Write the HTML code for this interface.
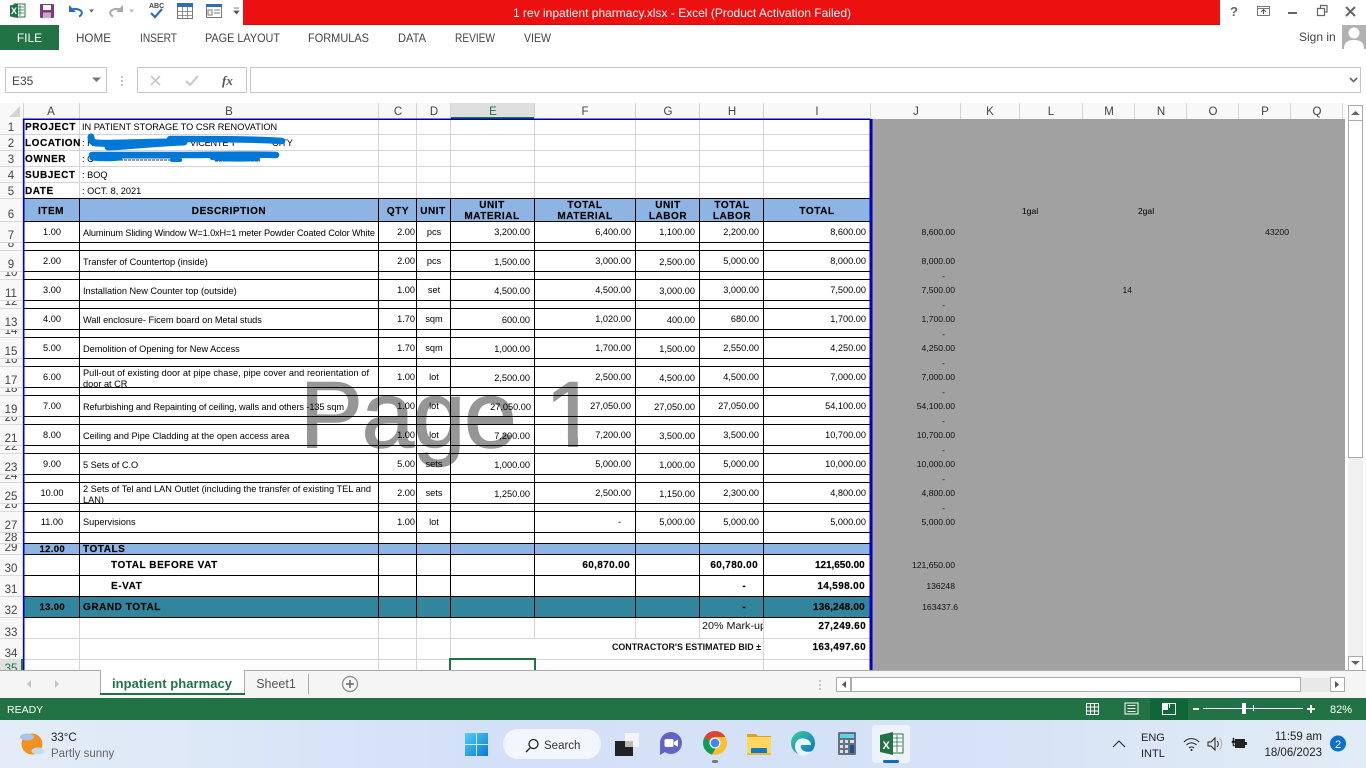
<!DOCTYPE html>
<html><head><meta charset="utf-8"><title>1 rev inpatient pharmacy.xlsx - Excel</title>
<style>
html,body{margin:0;padding:0;background:#fff;width:1366px;height:768px;overflow:hidden}
svg{display:block;font-family:"Liberation Sans",sans-serif}
.rb{font-size:12px;fill:#444}
.hd{font-size:11.5px;fill:#444;text-anchor:middle}
.t{font-size:9.2px;fill:#000}
.c{font-size:9.2px;fill:#000;text-anchor:middle}
.r{font-size:9.2px;fill:#000;text-anchor:end}
.b{font-size:10px;font-weight:bold;fill:#000;letter-spacing:.55px;stroke:#000;stroke-width:.15}
.bc{font-size:10px;font-weight:bold;fill:#000;letter-spacing:.55px;text-anchor:middle;stroke:#000;stroke-width:.15}
.br{font-size:10px;font-weight:bold;fill:#000;letter-spacing:.35px;text-anchor:end;stroke:#000;stroke-width:.15}
.j{font-size:8.6px;fill:#111;text-anchor:end}
.tb{font-size:11.5px;fill:#222}
</style></head><body>
<svg width="1366" height="768" viewBox="0 0 1366 768" xmlns="http://www.w3.org/2000/svg">
<rect width="1366" height="768" fill="#fff"/>

<!-- title bar -->
<rect x="243" y="0" width="977" height="25" fill="#ec1010"/>
<rect x="243" y="24" width="977" height="1" fill="#c81010"/>
<text x="682" y="17" font-size="12" fill="#fff" text-anchor="middle" textLength="338">1 rev inpatient pharmacy.xlsx -  Excel (Product Activation Failed)</text>

<!-- QAT -->
<path d="M14 4h11v13H14z" fill="#fff" stroke="#217346"/><path d="M17 7h7M17 10h7M17 13h7M20 5v11" stroke="#217346" fill="none" stroke-width=".8"/>
<path d="M10 5.500l8-1.500v14l-8-1.500z" fill="#217346"/><text x="11" y="14" font-size="9" font-weight="bold" fill="#fff">X</text>
<rect x="40" y="4" width="14" height="14" rx="1" fill="#80397b"/><rect x="43" y="5" width="8" height="5" fill="#fff"/><rect x="43" y="12.500" width="8" height="5.500" fill="#c9a7c6"/>
<path d="M70 11a7 5.500 0 0 1 12 1.500a5 5 0 0 1-3 4" fill="none" stroke="#2a6ebb" stroke-width="2"/><path d="M69 5v7h7z" fill="#2a6ebb"/><path d="M89 9.500h5l-2.500 3z" fill="#666"/>
<path d="M122 11a7 5.500 0 0 0-12 1.500a5 5 0 0 0 3 4" fill="none" stroke="#a9a9a9" stroke-width="2"/><path d="M123 5v7h-7z" fill="#a9a9a9"/><path d="M129 9.500h5l-2.500 3z" fill="#b5b5b5"/>
<text x="149" y="8" font-size="7" font-weight="bold" fill="#444">ABC</text><path d="M151 13l4 4 7-8" fill="none" stroke="#2a6ebb" stroke-width="2.200"/>
<rect x="177.500" y="3.500" width="15" height="15" fill="#fff" stroke="#777"/><rect x="177" y="3" width="16" height="4" fill="#2a6ebb"/><path d="M177.500 11.500h15M177.500 15.500h15M182.500 7v11M187.500 7v11" stroke="#777" fill="none" stroke-width=".8"/>
<rect x="206.500" y="4.500" width="15" height="13" fill="#fff" stroke="#777"/><rect x="206" y="4" width="16" height="3" fill="#2a6ebb"/><path d="M208 10h4v5h-4zM214 10h6M214 13h6" fill="none" stroke="#777"/>
<path d="M234 8h5M234 11h5l-2.500 3z" fill="#555" stroke="#555" stroke-width=".7"/>

<!-- window controls -->
<text x="1234" y="16" font-size="13" font-weight="bold" fill="#666" text-anchor="middle">?</text>
<rect x="1257.500" y="6.500" width="12" height="9" fill="none" stroke="#777"/><path d="M1257 8.500h13" stroke="#777"/><path d="M1263.500 14v-4M1261 12l2.500-2.500 2.500 2.500" fill="none" stroke="#555"/>
<rect x="1288" y="12" width="9" height="2" fill="#666"/>
<path d="M1317.500 8.500h7v7h-7zM1320.500 8v-2.500h6.500v6.500h-2.500" fill="none" stroke="#666" stroke-width="1.200"/>
<path d="M1346 7l9 9M1355 7l-9 9" stroke="#666" stroke-width="2"/>

<!-- ribbon tabs -->
<rect x="0" y="25" width="59" height="25" fill="#217346"/>
<text x="29.500" y="42" font-size="12" fill="#fff" text-anchor="middle">FILE</text>
<text class="rb" x="76" y="42" textLength="35" lengthAdjust="spacingAndGlyphs">HOME</text><text class="rb" x="140" y="42" textLength="37" lengthAdjust="spacingAndGlyphs">INSERT</text><text class="rb" x="205" y="42" textLength="75" lengthAdjust="spacingAndGlyphs">PAGE LAYOUT</text><text class="rb" x="308" y="42" textLength="61" lengthAdjust="spacingAndGlyphs">FORMULAS</text><text class="rb" x="398" y="42" textLength="28" lengthAdjust="spacingAndGlyphs">DATA</text><text class="rb" x="455" y="42" textLength="40" lengthAdjust="spacingAndGlyphs">REVIEW</text><text class="rb" x="524" y="42" textLength="27" lengthAdjust="spacingAndGlyphs">VIEW</text>
<text x="1299" y="41" font-size="12" fill="#444">Sign in</text>
<rect x="1342" y="25" width="24" height="24" fill="#b1b1b1"/><circle cx="1354" cy="33" r="5.500" fill="#fff"/><path d="M1344 49c0-7 4-9 10-9s10 2 10 9z" fill="#fff"/>

<!-- formula bar -->
<rect x="5.500" y="67.500" width="101" height="25" fill="#fff" stroke="#c6c6c6"/>
<text x="12" y="85" font-size="12" fill="#444">E35</text><path d="M92 77.500h9l-4.500 4.500z" fill="#777"/>
<path d="M122 76v2M122 80v2M122 84v2" stroke="#999" stroke-width="1.200"/>
<rect x="137.500" y="67.500" width="109" height="25" fill="#fff" stroke="#c6c6c6"/>
<rect x="250.500" y="67.500" width="1110" height="25" fill="#fff" stroke="#c6c6c6"/>
<path d="M151 76l9 9M160 76l-9 9" stroke="#c8c8c8" stroke-width="1.800"/>
<path d="M186 81l4 4 8-9" fill="none" stroke="#c8c8c8" stroke-width="2"/>
<text x="222" y="85" font-size="13" font-style="italic" font-family="Liberation Serif" font-weight="bold" fill="#555">fx</text>
<path d="M1350 78l3.500 3.500 3.500-3.500" fill="none" stroke="#666" stroke-width="1.600"/>

<!-- headers background -->
<rect x="0" y="103" width="1345" height="16" fill="#f8f8f8"/>
<rect x="0" y="103" width="23" height="567" fill="#f8f8f8"/>
<path d="M20 106v11h-11z" fill="#d4d4d4"/>
<rect x="450.500" y="103" width="84" height="15" fill="#dfdfdf"/><rect x="450.500" y="117" width="84" height="2" fill="#217346"/>
<path d="M23.500 103v16M79.500 103v16M378.500 103v16M416.500 103v16M450.500 103v16M534.500 103v16M635.500 103v16M699.500 103v16M763.500 103v16M870.500 103v16M960.500 103v16M1019.500 103v16M1082.500 103v16M1134.500 103v16M1186.500 103v16M1238.500 103v16M1290.500 103v16M1342.500 103v16" stroke="#d4d4d4" fill="none"/>
<g>
<text class="hd" x="51" y="115">A</text><text class="hd" x="229" y="115">B</text><text class="hd" x="398" y="115">C</text><text class="hd" x="434" y="115">D</text><text class="hd" x="493" y="115" style="fill:#217346">E</text><text class="hd" x="585" y="115">F</text><text class="hd" x="668" y="115">G</text><text class="hd" x="732" y="115">H</text><text class="hd" x="817" y="115">I</text><text class="hd" x="916" y="115">J</text><text class="hd" x="990" y="115">K</text><text class="hd" x="1051" y="115">L</text><text class="hd" x="1109" y="115">M</text><text class="hd" x="1161" y="115">N</text><text class="hd" x="1213" y="115">O</text><text class="hd" x="1265" y="115">P</text><text class="hd" x="1317" y="115">Q</text>
</g>

<!-- gray out-of-print area -->
<rect x="872" y="119" width="473" height="551" fill="#a1a1a1"/>

<!-- light gridlines -->
<path d="M23 134.500h847M23 150.500h847M23 166.500h847M23 182.500h847M23 638.500h847M23 659.500h847M79.500 119v79M378.500 119v79M416.500 119v79M450.500 119v79M534.500 119v79M635.500 119v79M699.500 119v79M763.500 119v79M79.500 618v52M378.500 618v52M416.500 618v52M450.500 618v52M534.500 618v21M635.500 618v21M699.500 618v21M763.500 618v52" stroke="#d4d4d4" fill="none"/>

<!-- fills -->
<rect x="24" y="199" width="846" height="22" fill="#8eb4e3"/>
<rect x="24" y="543" width="846" height="11" fill="#8eb4e3"/>
<rect x="24" y="596" width="846" height="21" fill="#31859c"/>

<!-- watermark sits behind the cell text and borders -->
<defs><clipPath id="oneclip"><rect x="540" y="370" width="50" height="69"/></clipPath></defs>
<text x="300" y="447" font-size="94" letter-spacing="-1" fill="#969696" stroke="#969696" stroke-width="1.500">Page</text>
<text x="545" y="447" font-size="94" fill="#969696" stroke="#969696" stroke-width="1.500" clip-path="url(#oneclip)">1</text>
<rect x="568" y="438" width="10" height="9" fill="#969696"/>

<!-- top rows text -->
<text class="b" x="25" y="130">PROJECT</text><text class="t" x="82" y="130">IN PATIENT STORAGE TO CSR RENOVATION</text>
<text class="b" x="25" y="146">LOCATION</text><text class="t" x="82" y="146">: H</text><text class="t" x="190" y="146" textLength="46">VICENTE T</text><text class="t" x="272" y="146">CITY</text>
<text class="b" x="25" y="162">OWNER</text><text class="t" x="82" y="162">: C</text>
<text class="b" x="25" y="178">SUBJECT</text><text class="t" x="82" y="178">: BOQ</text>
<text class="b" x="25" y="194">DATE</text><text class="t" x="82" y="194">: OCT. 8, 2021</text>

<!-- table header -->
<text class="bc" x="51" y="214">ITEM</text><text class="bc" x="229" y="214">DESCRIPTION</text><text class="bc" x="398" y="214">QTY</text><text class="bc" x="433" y="214">UNIT</text>
<text class="bc" x="492" y="208">UNIT</text><text class="bc" x="492" y="219">MATERIAL</text>
<text class="bc" x="585" y="208">TOTAL</text><text class="bc" x="585" y="219">MATERIAL</text>
<text class="bc" x="668" y="208">UNIT</text><text class="bc" x="668" y="219">LABOR</text>
<text class="bc" x="732" y="208">TOTAL</text><text class="bc" x="732" y="219">LABOR</text>
<text class="bc" x="817" y="214">TOTAL</text>

<!-- data -->
<g>
<text class="c" x="52" y="235">1.00</text><text class="t" x="83" y="236" textLength="292">Aluminum Sliding Window W=1.0xH=1 meter Powder Coated Color White</text><text class="r" x="415" y="235">2.00</text><text class="c" x="434" y="235">pcs</text><text class="r" x="530" y="235">3,200.00</text><text class="r" x="631" y="235">6,400.00</text><text class="r" x="695" y="235">1,100.00</text><text class="r" x="759" y="235">2,200.00</text><text class="r" x="866" y="235">8,600.00</text>
<text class="c" x="52" y="264">2.00</text><text class="t" x="83" y="265">Transfer of Countertop (inside)</text><text class="r" x="415" y="264">2.00</text><text class="c" x="434" y="264">pcs</text><text class="r" x="530" y="265">1,500.00</text><text class="r" x="631" y="264">3,000.00</text><text class="r" x="695" y="265">2,500.00</text><text class="r" x="759" y="264">5,000.00</text><text class="r" x="866" y="264">8,000.00</text>
<text class="c" x="52" y="293">3.00</text><text class="t" x="83" y="294">Installation New Counter top (outside)</text><text class="r" x="415" y="293">1.00</text><text class="c" x="434" y="293">set</text><text class="r" x="530" y="294">4,500.00</text><text class="r" x="631" y="293">4,500.00</text><text class="r" x="695" y="294">3,000.00</text><text class="r" x="759" y="293">3,000.00</text><text class="r" x="866" y="293">7,500.00</text>
<text class="c" x="52" y="322">4.00</text><text class="t" x="83" y="323">Wall enclosure- Ficem board on Metal studs</text><text class="r" x="415" y="322">1.70</text><text class="c" x="434" y="322">sqm</text><text class="r" x="530" y="323">600.00</text><text class="r" x="631" y="322">1,020.00</text><text class="r" x="695" y="323">400.00</text><text class="r" x="759" y="322">680.00</text><text class="r" x="866" y="322">1,700.00</text>
<text class="c" x="52" y="351">5.00</text><text class="t" x="83" y="352">Demolition of Opening for New Access</text><text class="r" x="415" y="351">1.70</text><text class="c" x="434" y="351">sqm</text><text class="r" x="530" y="352">1,000.00</text><text class="r" x="631" y="351">1,700.00</text><text class="r" x="695" y="352">1,500.00</text><text class="r" x="759" y="351">2,550.00</text><text class="r" x="866" y="351">4,250.00</text>
<text class="c" x="52" y="380">6.00</text><text class="t" x="83" y="376" textLength="286">Pull-out of existing door at pipe chase, pipe cover and reorientation of</text><text class="t" x="83" y="387">door at CR</text><text class="r" x="415" y="380">1.00</text><text class="c" x="434" y="380">lot</text><text class="r" x="530" y="381">2,500.00</text><text class="r" x="631" y="380">2,500.00</text><text class="r" x="695" y="381">4,500.00</text><text class="r" x="759" y="380">4,500.00</text><text class="r" x="866" y="380">7,000.00</text>
<text class="c" x="52" y="409">7.00</text><text class="t" x="83" y="410" textLength="261">Refurbishing and Repainting of ceiling, walls and others -135 sqm</text><text class="r" x="415" y="409">1.00</text><text class="c" x="434" y="409">lot</text><text class="r" x="531" y="410">27,050.00</text><text class="r" x="631" y="409">27,050.00</text><text class="r" x="695" y="410">27,050.00</text><text class="r" x="759" y="409">27,050.00</text><text class="r" x="866" y="409">54,100.00</text>
<text class="c" x="52" y="438">8.00</text><text class="t" x="83" y="439">Ceiling and Pipe Cladding at the open access area</text><text class="r" x="415" y="438">1.00</text><text class="c" x="434" y="438">lot</text><text class="r" x="530" y="439">7,200.00</text><text class="r" x="631" y="438">7,200.00</text><text class="r" x="695" y="439">3,500.00</text><text class="r" x="759" y="438">3,500.00</text><text class="r" x="866" y="438">10,700.00</text>
<text class="c" x="52" y="467">9.00</text><text class="t" x="83" y="468">5 Sets of C.O</text><text class="r" x="415" y="467">5.00</text><text class="c" x="434" y="467">sets</text><text class="r" x="530" y="468">1,000.00</text><text class="r" x="631" y="467">5,000.00</text><text class="r" x="695" y="468">1,000.00</text><text class="r" x="759" y="467">5,000.00</text><text class="r" x="866" y="467">10,000.00</text>
<text class="c" x="52" y="496">10.00</text><text class="t" x="83" y="492" textLength="288">2 Sets of Tel and LAN Outlet (including the transfer of existing TEL and</text><text class="t" x="83" y="503">LAN)</text><text class="r" x="415" y="496">2.00</text><text class="c" x="434" y="496">sets</text><text class="r" x="530" y="497">1,250.00</text><text class="r" x="631" y="496">2,500.00</text><text class="r" x="695" y="497">1,150.00</text><text class="r" x="759" y="496">2,300.00</text><text class="r" x="866" y="496">4,800.00</text>
<text class="c" x="52" y="525">11.00</text><text class="t" x="83" y="525">Supervisions</text><text class="r" x="415" y="525">1.00</text><text class="c" x="434" y="525">lot</text><text class="r" x="621" y="525">-</text><text class="r" x="695" y="525">5,000.00</text><text class="r" x="759" y="525">5,000.00</text><text class="r" x="866" y="525">5,000.00</text>
</g>
<!-- clip overflow of 2-line rows -->
<rect x="80" y="388" width="60" height="7" fill="#fff"/><rect x="80" y="504" width="30" height="7" fill="#fff"/>

<!-- black grid -->
<path d="M24 198.500h846M24 221.500h846M24 242.500h846M24 250.500h846M24 271.500h846M24 279.500h846M24 300.500h846M24 308.500h846M24 329.500h846M24 337.500h846M24 358.500h846M24 366.500h846M24 387.500h846M24 395.500h846M24 416.500h846M24 424.500h846M24 445.500h846M24 453.500h846M24 474.500h846M24 482.500h846M24 503.500h846M24 511.500h846M24 532.500h846M24 543.500h846M24 554.500h846M24 575.500h846M24 596.500h846M24 617.500h846" stroke="#000" fill="none"/>
<path d="M79.500 198v420M378.500 198v420M416.500 198v420M450.500 198v420M534.500 198v420M635.500 198v420M699.500 198v420M763.500 198v420" stroke="#000" fill="none"/>

<!-- totals -->
<text class="br" x="65" y="552" style="font-size:9.500px">12.00</text><text class="b" x="83" y="552">TOTALS</text>
<text class="b" x="111" y="568">TOTAL BEFORE VAT</text><text class="br" x="630" y="568">60,870.00</text><text class="br" x="758" y="568">60,780.00</text><text class="br" x="865" y="568" textLength="50">121,650.00</text>
<text class="b" x="111" y="589">E-VAT</text><text class="br" x="746" y="589">-</text><text class="br" x="865" y="589">14,598.00</text>
<text class="br" x="65" y="610" style="font-size:9.500px">13.00</text><text class="b" x="83" y="610">GRAND TOTAL</text><text class="br" x="746" y="610">-</text><text class="br" x="865" y="610" textLength="52">136,248.00</text>
<svg x="700" y="618" width="63" height="20" viewBox="700 618 63 20"><text x="702" y="629" font-size="9.800" fill="#111" textLength="64" lengthAdjust="spacingAndGlyphs">20%  Mark-up</text></svg>
<text class="br" x="866" y="629">27,249.60</text>
<text x="612" y="650" font-size="9.500" font-weight="bold" fill="#111" textLength="149" lengthAdjust="spacingAndGlyphs">CONTRACTOR'S ESTIMATED BID ±</text>
<text class="br" x="866" y="650">163,497.60</text>

<!-- right columns in gray -->
<text class="c" x="1030" y="214" style="font-size:8.600px">1gal</text><text class="c" x="1146" y="214" style="font-size:8.600px">2gal</text>
<text class="j" x="1289" y="235">43200</text><text class="j" x="1132" y="293">14</text>
<text class="j" x="955" y="235">8,600.00</text><text class="j" x="955" y="264">8,000.00</text><text class="j" x="945" y="279">-</text><text class="j" x="955" y="293">7,500.00</text><text class="j" x="945" y="308">-</text><text class="j" x="955" y="322">1,700.00</text><text class="j" x="945" y="337">-</text><text class="j" x="955" y="351">4,250.00</text><text class="j" x="945" y="366">-</text><text class="j" x="955" y="380">7,000.00</text><text class="j" x="945" y="395">-</text><text class="j" x="955" y="409">54,100.00</text><text class="j" x="945" y="424">-</text><text class="j" x="955" y="438">10,700.00</text><text class="j" x="945" y="453">-</text><text class="j" x="955" y="467">10,000.00</text><text class="j" x="945" y="482">-</text><text class="j" x="955" y="496">4,800.00</text><text class="j" x="945" y="511">-</text><text class="j" x="955" y="525">5,000.00</text>
<text class="j" x="955" y="568">121,650.00</text><text class="j" x="955" y="589">136248</text><text class="j" x="958" y="610">163437.6</text>

<!-- redaction strokes -->
<path d="M120 160h50M215 161h45" fill="none" stroke="#333" stroke-width="1" stroke-dasharray="3 1"/>
<path d="M91 137c0 4 2 6 6 6 14 1 40-1 76-1" fill="none" stroke="#0078d7" stroke-width="7" stroke-linecap="round"/>
<path d="M108 147c20-1 50-4 76-5" fill="none" stroke="#0078d7" stroke-width="7" stroke-linecap="round"/>
<path d="M170 139c40 0 80 0 112 2" fill="none" stroke="#0078d7" stroke-width="6.500" stroke-linecap="round"/>
<path d="M92 155c30 0 70 0 90 0s70-1 94 0" fill="none" stroke="#0078d7" stroke-width="6.500" stroke-linecap="round"/>
<path d="M92 158c10 1 20 1 28 0" fill="none" stroke="#0078d7" stroke-width="5" stroke-linecap="round"/>
<path d="M120 157h50" fill="none" stroke="#0078d7" stroke-width="3" stroke-linecap="round"/>
<path d="M172 160h8" fill="none" stroke="#0078d7" stroke-width="4" stroke-linecap="round"/>
<path d="M212 158c15 2 30 2 46 1" fill="none" stroke="#0078d7" stroke-width="4" stroke-linecap="round"/>

<!-- blue print border -->
<rect x="23" y="119" width="1.500" height="551" fill="#0000c8"/>
<rect x="23" y="118.500" width="847" height="1.500" fill="#0000a8"/>
<rect x="869.500" y="119" width="3" height="551" fill="#0000c8"/>

<!-- selected cell -->
<rect x="450" y="659" width="85" height="14" fill="#fff" stroke="#217346" stroke-width="2"/>

<!-- row headers -->
<rect x="0" y="119" width="23" height="551" fill="#f8f8f8"/>
<path d="M0 134.500h23M0 150.500h23M0 166.500h23M0 182.500h23M0 198.500h23M0 221.500h23M0 242.500h23M0 250.500h23M0 271.500h23M0 279.500h23M0 300.500h23M0 308.500h23M0 329.500h23M0 337.500h23M0 358.500h23M0 366.500h23M0 387.500h23M0 395.500h23M0 416.500h23M0 424.500h23M0 445.500h23M0 453.500h23M0 474.500h23M0 482.500h23M0 503.500h23M0 511.500h23M0 532.500h23M0 543.500h23M0 554.500h23M0 575.500h23M0 596.500h23M0 617.500h23M0 638.500h23M0 659.500h23" stroke="#d9d9d9" fill="none"/>
<rect x="22" y="119" width="1" height="540" fill="#d4d4d4"/>
<rect x="0" y="660" width="21" height="10" fill="#dfdfdf"/><rect x="21" y="659" width="2" height="11" fill="#217346"/>
<text class="hd" x="11" y="131">1</text><text class="hd" x="11" y="147">2</text><text class="hd" x="11" y="163">3</text><text class="hd" x="11" y="179">4</text><text class="hd" x="11" y="195">5</text><text class="hd" x="11" y="218">6</text><text class="hd" x="11" y="239">7</text>
<svg x="0" y="243" width="23" height="7" viewBox="0 243 23 7"><text class="hd" x="11" y="247">8</text></svg>
<text class="hd" x="11" y="268">9</text>
<svg x="0" y="272" width="23" height="7" viewBox="0 272 23 7"><text class="hd" x="11" y="276">10</text></svg>
<text class="hd" x="11" y="297">11</text>
<svg x="0" y="301" width="23" height="7" viewBox="0 301 23 7"><text class="hd" x="11" y="305">12</text></svg>
<text class="hd" x="11" y="326">13</text>
<svg x="0" y="330" width="23" height="7" viewBox="0 330 23 7"><text class="hd" x="11" y="334">14</text></svg>
<text class="hd" x="11" y="355">15</text>
<svg x="0" y="359" width="23" height="7" viewBox="0 359 23 7"><text class="hd" x="11" y="363">16</text></svg>
<text class="hd" x="11" y="384">17</text>
<svg x="0" y="388" width="23" height="7" viewBox="0 388 23 7"><text class="hd" x="11" y="392">18</text></svg>
<text class="hd" x="11" y="413">19</text>
<svg x="0" y="417" width="23" height="7" viewBox="0 417 23 7"><text class="hd" x="11" y="421">20</text></svg>
<text class="hd" x="11" y="442">21</text>
<svg x="0" y="446" width="23" height="7" viewBox="0 446 23 7"><text class="hd" x="11" y="450">22</text></svg>
<text class="hd" x="11" y="471">23</text>
<svg x="0" y="475" width="23" height="7" viewBox="0 475 23 7"><text class="hd" x="11" y="479">24</text></svg>
<text class="hd" x="11" y="500">25</text>
<svg x="0" y="504" width="23" height="7" viewBox="0 504 23 7"><text class="hd" x="11" y="508">26</text></svg>
<text class="hd" x="11" y="529">27</text>
<svg x="0" y="533" width="23" height="10" viewBox="0 533 23 10"><text class="hd" x="11" y="541">28</text></svg>
<svg x="0" y="544" width="23" height="10" viewBox="0 544 23 10"><text class="hd" x="11" y="551">29</text></svg>
<text class="hd" x="11" y="572">30</text><text class="hd" x="11" y="593">31</text><text class="hd" x="11" y="614">32</text><text class="hd" x="11" y="636">33</text><text class="hd" x="11" y="657">34</text>
<svg x="0" y="660" width="21" height="10" viewBox="0 660 21 10"><text class="hd" x="11" y="672" style="fill:#217346">35</text></svg>

<!-- vertical scrollbar -->
<rect x="1345" y="103" width="21" height="567" fill="#fff"/>
<rect x="1348" y="105" width="15" height="565" fill="#f0f0f0"/>
<rect x="1348.500" y="105.500" width="14" height="15" fill="#fff" stroke="#ababab"/><path d="M1351 115l4.500-4 4.500 4z" fill="#666"/>
<rect x="1348.500" y="120.500" width="14" height="337" fill="#fff" stroke="#ababab"/>
<rect x="1348.500" y="656.500" width="14" height="14" fill="#fff" stroke="#ababab"/><path d="M1351 661l4.500 4 4.500-4z" fill="#666"/>

<!-- sheet tabs -->
<rect x="0" y="670" width="1366" height="28" fill="#f5f5f5"/>
<rect x="0" y="670" width="100" height="1" fill="#ababab"/><rect x="244" y="670" width="1122" height="1" fill="#ababab"/>
<path d="M31 680v8l-4-4zM55 680v8l4-4z" fill="#c4c4c4"/>
<path d="M100.500 670v25M244.500 670v25" stroke="#ababab" fill="none"/>
<rect x="101" y="670" width="143" height="23" fill="#fff"/><rect x="100" y="693" width="145" height="2" fill="#217346"/>
<text x="172" y="688" font-size="13" font-weight="bold" fill="#217346" text-anchor="middle" textLength="120">inpatient pharmacy</text>
<text x="276" y="688" font-size="12.500" fill="#555" text-anchor="middle">Sheet1</text>
<rect x="308" y="674" width="1" height="20" fill="#ababab"/>
<circle cx="350" cy="684" r="7.500" fill="none" stroke="#888" stroke-width="1.200"/><path d="M350 680v8M346 684h8" stroke="#666" stroke-width="1.500"/>
<path d="M820 680v2M820 684v2M820 688v2" stroke="#999"/>
<rect x="836.500" y="677.500" width="14" height="14" fill="#fff" stroke="#ababab"/><path d="M846 681v7l-4-3.500z" fill="#555"/>
<rect x="851.500" y="677.500" width="449" height="14" fill="#fff" stroke="#ababab"/>
<rect x="1301" y="678" width="29" height="14" fill="#e9e9e9"/>
<rect x="1330.500" y="677.500" width="14" height="14" fill="#fff" stroke="#ababab"/><path d="M1335 681v7l4-3.500z" fill="#555"/>

<!-- status bar -->
<rect x="0" y="698" width="1366" height="22" fill="#217346"/>
<text x="7" y="713" font-size="10.500" fill="#fff">READY</text>
<path d="M1086.500 703.500h12v11h-12zM1086.500 707h12M1086.500 711h12M1090.500 703.500v11M1094.500 703.500v11" stroke="#fff" fill="none"/>
<rect x="1125" y="703" width="13" height="11" fill="none" stroke="#fff"/><path d="M1127.500 705.500h8M1127.500 708.500h8M1127.500 711.500h8" stroke="#fff"/>
<rect x="1150" y="699" width="38" height="21" fill="#0f6638"/>
<path d="M1162.500 703.500h13v11h-13z" fill="none" stroke="#fff"/><path d="M1163 704h5v6h-5z" fill="#fff"/><path d="M1169 703v5h1v-5z" fill="#fff"/>
<rect x="1193" y="708" width="6" height="2" fill="#fff"/>
<rect x="1203" y="708" width="100" height="1" fill="#fff"/>
<rect x="1242" y="703" width="4" height="11" fill="#fff"/><rect x="1253" y="705" width="1" height="6" fill="#fff"/>
<path d="M1307 709h8M1311 705v8" stroke="#fff" stroke-width="2"/>
<text x="1330" y="713" font-size="11" fill="#fff">82%</text>

<!-- taskbar -->
<defs>
<linearGradient id="tb" x1="0" x2="1" y1="0" y2="0"><stop offset="0" stop-color="#e4edf7"/><stop offset=".35" stop-color="#d3e0f7"/><stop offset=".7" stop-color="#d6e2f6"/><stop offset="1" stop-color="#e1ecf6"/></linearGradient>
<linearGradient id="wn" x1="0" x2="1" y1="0" y2="1"><stop offset="0" stop-color="#4fd0f5"/><stop offset="1" stop-color="#0a78d8"/></linearGradient>
<linearGradient id="ed" x1="0" x2="1" y1="0" y2="1"><stop offset="0" stop-color="#3ccf9a"/><stop offset="1" stop-color="#0b6fc9"/></linearGradient>
</defs>
<rect x="0" y="720" width="1366" height="48" fill="url(#tb)"/>
<!-- weather -->
<circle cx="32" cy="744" r="10.500" fill="#f29020"/>
<ellipse cx="27" cy="737" rx="7" ry="3.500" fill="#a9c6e6"/><ellipse cx="38" cy="751" rx="6.500" ry="3.500" fill="#c7dbf0"/>
<text x="51" y="741" font-size="11.500" fill="#222">33°C</text><text x="51" y="757" font-size="11.500" fill="#666">Partly sunny</text>
<!-- win logo -->
<path d="M465 733h11v11h-11zM477 733h11v11h-11zM465 745h11v11h-11zM477 745h11v11h-11z" fill="url(#wn)"/>
<!-- search -->
<rect x="503" y="729" width="98" height="30" rx="15" fill="#f3f6fc"/>
<circle cx="533.500" cy="744" r="4.500" fill="none" stroke="#222" stroke-width="1.300"/><path d="M530 748l-4 4" stroke="#222" stroke-width="1.300"/>
<text x="544" y="749" font-size="11.500" fill="#333">Search</text>
<!-- task view -->
<rect x="625" y="733" width="14" height="14" fill="#f4f4f4"/><rect x="615" y="741" width="18" height="15" fill="#222"/><rect x="625" y="741" width="8" height="6" fill="#bbb"/>
<!-- meet -->
<circle cx="671" cy="743" r="11" fill="#6264c4"/><path d="M660 744v11l5-3z" fill="#6264c4"/><rect x="664.500" y="739" width="9" height="8" rx="1.500" fill="#fff"/><path d="M674 742l4-2.500v7.500l-4-2.500z" fill="#fff"/>
<!-- chrome -->
<circle cx="715" cy="743" r="12" fill="#fbc02d"/><path d="M715 731a12 12 0 0 1 10.400 6H715a6 6 0 0 0-5.600 3.800L704.600 737A12 12 0 0 1 715 731z" fill="#db4437"/><path d="M704.600 737a12 12 0 0 0 7.400 17.600l5-8.600a6 6 0 0 1-7.600-5.200z" fill="#0f9d58"/><circle cx="715" cy="743" r="5.500" fill="#fff"/><circle cx="715" cy="743" r="4.300" fill="#4285f4"/>
<rect x="712" y="760" width="6" height="3" rx="1.500" fill="#777"/>
<!-- folder -->
<path d="M747 734h9l2 2h13v19h-24z" fill="#d9a520"/><rect x="747" y="737" width="24" height="18" fill="#ffd75e"/><rect x="751" y="748" width="16" height="7" rx="1" fill="#0f7bc4"/><rect x="747" y="753" width="24" height="2" fill="#f0b73c"/>
<!-- edge -->
<circle cx="803" cy="743" r="12" fill="url(#ed)"/><path d="M795 746c0-6 6-9 11-7 3 1 5 3 5 6h-8c-2 0-3 1-2 3 1 3 6 5 11 3-3 4-8 5-12 4-3-1-5-5-5-9z" fill="#fff" opacity=".9"/>
<!-- calculator -->
<rect x="838" y="732" width="18" height="23" rx="1" fill="#64727f"/><rect x="840" y="734" width="14" height="4" fill="#5fd2ee"/>
<path d="M840 740h3v3h-3zM845 740h3v3h-3zM850 740h4v3h-4zM840 745h3v3h-3zM845 745h3v3h-3zM840 750h3v3h-3zM845 750h3v3h-3z" fill="#d8dfe6"/><rect x="850" y="745" width="4" height="8" fill="#1f4e8c"/>
<!-- excel active -->
<rect x="872" y="725" width="38" height="38" rx="3" fill="#eef3fb"/>
<rect x="889" y="734" width="14" height="19" fill="#fff" stroke="#217346"/><path d="M893 738h9M893 742h9M893 746h9M897 735v17" stroke="#217346" stroke-width=".8"/>
<path d="M880 735l13-3v23l-13-3z" fill="#217346"/><text x="882.500" y="749" font-size="11" font-weight="bold" fill="#fff">X</text>
<rect x="883" y="760" width="16" height="3" rx="1.500" fill="#0a6cc9"/>
<!-- tray -->
<path d="M1113 747l6-6 6 6" fill="none" stroke="#222" stroke-width="1.100"/>
<text x="1141" y="741" font-size="11" fill="#222">ENG</text><text x="1141" y="757" font-size="11" fill="#222">INTL</text>
<path d="M1184 742a10 10 0 0 1 15 0M1186.500 745a7 7 0 0 1 10 0M1189 748a3.500 3.500 0 0 1 5 0" fill="none" stroke="#222"/><circle cx="1191.500" cy="750" r="1" fill="#222"/>
<path d="M1208 742h3l4-4v12l-4-4h-3z" fill="none" stroke="#222"/><path d="M1217 741a4 4 0 0 1 0 6" fill="none" stroke="#222"/><path d="M1219.500 738.500a8 8 0 0 1 0 11" fill="none" stroke="#aaa"/>
<rect x="1235" y="739" width="10" height="9" fill="#222"/><rect x="1245" y="742" width="2" height="3" fill="#222"/><path d="M1233 738v3h-1v2h3v-2h-1v-3zM1233 743v3h2" fill="#222" stroke="#222" stroke-width=".5"/>
<text x="1322" y="740" font-size="11.500" fill="#222" text-anchor="end">11:59 am</text><text x="1322" y="756" font-size="11.500" fill="#222" text-anchor="end">18/06/2023</text>
<circle cx="1338" cy="743.500" r="8" fill="#0a6fd0"/><text x="1338" y="748" font-size="11" fill="#fff" text-anchor="middle">2</text>
</svg>
</body></html>
